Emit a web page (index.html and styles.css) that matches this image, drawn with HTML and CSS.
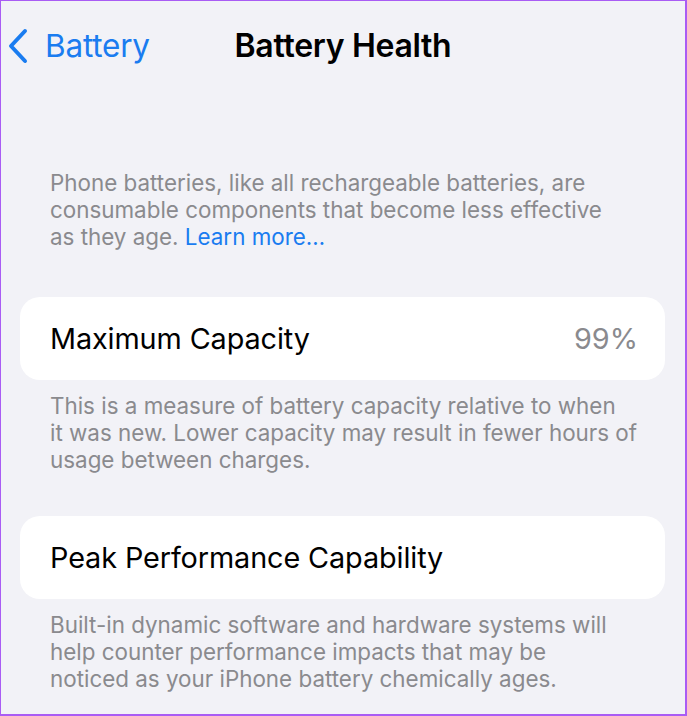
FILE: index.html
```html
<!DOCTYPE html>
<html>
<head>
<meta charset="utf-8">
<link rel="stylesheet" href="styles.css">
</head>
<body>
<div class="screen">
  <header class="nav">
    <div class="back">
      <svg class="chev" width="22" height="36" viewBox="0 0 22 36"><path d="M18 3 L4 18 L18 33" fill="none" stroke="#1a7cf0" stroke-width="4" stroke-linecap="round" stroke-linejoin="round"/></svg>
      <span class="back-label">Battery</span>
    </div>
    <h1 class="title">Battery Health</h1>
  </header>
  <p class="note intro">Phone batteries, like all rechargeable batteries, are<br>consumable components that become less effective<br>as they age. <span class="link">Learn more…</span></p>
  <div class="card">
    <span class="label">Maximum Capacity</span>
    <span class="value">99%</span>
  </div>
  <p class="note">This is a measure of battery capacity relative to when<br>it was new. Lower capacity may result in fewer hours of<br>usage between charges.</p>
  <div class="card card2">
    <span class="label">Peak Performance Capability</span>
  </div>
  <p class="note">Built-in dynamic software and hardware systems will<br>help counter performance impacts that may be<br>noticed as your iPhone battery chemically ages.</p>
</div>
</body>
</html>
```
FILE: styles.css
```css
html, body { margin: 0; padding: 0; }
body { width: 687px; height: 716px; overflow: hidden; background: #f2f2f7; font-family: Inter, "Noto Sans", sans-serif; }
.screen { box-sizing: border-box; width: 687px; height: 716px; border-style: solid; border-color: #a95cf4; border-width: 1px 2px 2px 1px; background: #f2f2f7; }
.nav { position: relative; height: 90px; display: flex; align-items: flex-start; }
.back { display: flex; align-items: center; padding: 27px 0 0 6px; gap: 16px; }
.back-label { color: #1a7cf0; font-size: 31.5px; line-height: 36px; letter-spacing: -0.2px; }
.title { position: absolute; left: 0; right: 0; top: 27px; margin: 0; text-align: center; font-size: 32px; font-weight: 600; line-height: 36px; color: #000; letter-spacing: -0.3px; }
.note { margin: 0; padding: 0 20px 0 49px; color: #8a8a8e; font-size: 22.4px; line-height: 27.1px; white-space: nowrap; }
.intro { margin-top: 78px; }
.link { color: #1a7cf0; }
.card { margin: 47px 20px 12px 19px; height: 83px; background: #fff; border-radius: 20px; display: flex; align-items: center; justify-content: space-between; padding: 0 27px 0 30px; }
.card2 { margin-top: 42px; }
.label { font-size: 28.8px; color: #000; letter-spacing: -0.1px; }
.value { font-size: 28.8px; color: #8a8a8e; }
```
